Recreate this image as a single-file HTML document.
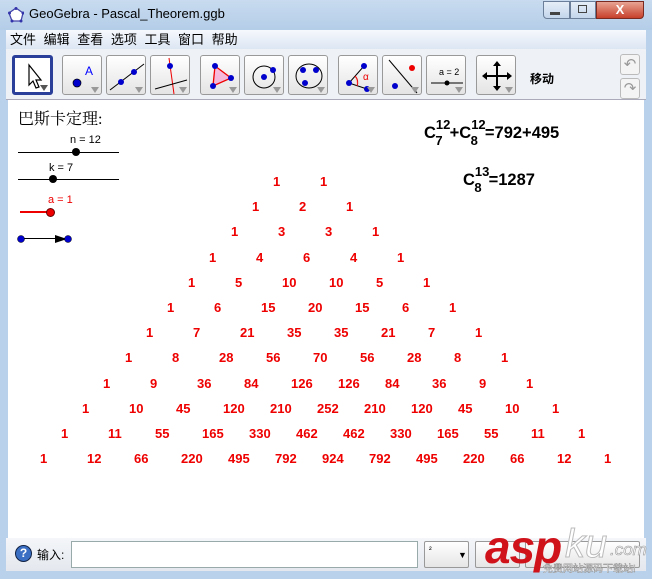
<!DOCTYPE html>
<html><head><meta charset="utf-8"><style>
*{margin:0;padding:0;box-sizing:border-box}
body{width:652px;height:579px;overflow:hidden;position:relative;background:#b9d1ea;font-family:"Liberation Sans","Noto Sans CJK SC",sans-serif}
.a{position:absolute}
.title{left:0;top:0;width:652px;height:30px;background:linear-gradient(#c8dbef,#b4cde8)}
.menu{left:6px;top:30px;width:640px;height:19px;background:linear-gradient(#f6f9fd,#dce6f3);font-size:13px;color:#000;line-height:19px;padding-left:4px;word-spacing:4px}
.tool{left:6px;top:49px;width:640px;height:51px;background:#eef2f7;border-bottom:1px solid #aab}
.btn{position:absolute;top:55px;width:40px;height:40px;background:linear-gradient(#fff,#e4e4e4);border:1px solid #999;border-radius:3px}
.btn svg{position:absolute;left:0;top:0}
.tri{position:absolute;right:2px;bottom:1px;width:0;height:0;border-left:4px solid transparent;border-right:4px solid transparent;border-top:6px solid #999}
.canvas{left:8px;top:100px;width:636px;height:438px;background:#fff}
.row{position:absolute;font-weight:bold;font-size:13px;color:#e00;white-space:nowrap}
.row span{display:inline-block;width:47px;text-align:left}
.bottom{left:6px;top:538px;width:640px;height:33px;background:linear-gradient(#f4f6f9,#e4e8ee)}
</style></head><body>
<div class="a title"></div>
<svg class="a" style="left:8px;top:7px" width="16" height="16"><polygon points="8,1 15,6 13,14 4,14 1,6" fill="#fff" stroke="#44a" stroke-width="1.3"/><circle cx="8" cy="1.5" r="1.5" fill="#33a"/><circle cx="15" cy="6" r="1.5" fill="#33a"/><circle cx="13" cy="14" r="1.5" fill="#33a"/><circle cx="4" cy="14" r="1.5" fill="#33a"/><circle cx="1.5" cy="6" r="1.5" fill="#33a"/></svg>
<div class="a" style="left:29px;top:6px;font-size:13px">GeoGebra - Pascal_Theorem.ggb</div>
<div class="a" style="left:543px;top:1px;width:27px;height:18px;border:1px solid #6b7f9a;border-radius:0 0 0 4px;background:linear-gradient(#e5eef8,#c4d6ec)"></div>
<div class="a" style="left:550px;top:12px;width:10px;height:3px;background:#444"></div>
<div class="a" style="left:570px;top:1px;width:26px;height:18px;border:1px solid #6b7f9a;background:linear-gradient(#e5eef8,#c4d6ec)"></div>
<div class="a" style="left:578px;top:5px;width:9px;height:8px;border:1.5px solid #444"></div>
<div class="a" style="left:596px;top:1px;width:48px;height:18px;border:1px solid #7a2a20;border-radius:0 0 4px 0;background:linear-gradient(#e8a493,#c7402b);color:#fff;font-weight:bold;text-align:center;font-size:13px;line-height:16px">X</div>
<div class="a menu">文件 编辑 查看 选项 工具 窗口 帮助</div>
<div class="a tool"></div>
<div class="btn" style="left:12px;width:41px;border:3px solid #2a3f9a;background:#fff"><svg width="36" height="36"><path d="M14 7 L14 27 L18 23 L21 30 L24 29 L21 22 L26 22 Z" fill="#fff" stroke="#000" stroke-width="1.2"/></svg><div class="tri" style="border-top-color:#555"></div></div>
<div class="btn" style="left:62px"><svg width="40" height="40"><circle cx="14" cy="27" r="4" fill="#00c" stroke="#000" stroke-width=".7"/><text x="22" y="19" font-size="12" fill="#00f" font-family="Liberation Sans">A</text></svg><div class="tri"></div></div>
<div class="btn" style="left:106px"><svg width="40" height="40"><line x1="3" y1="34" x2="37" y2="8" stroke="#000"/><circle cx="14" cy="26" r="3" fill="#00c"/><circle cx="27" cy="16" r="3" fill="#00c"/></svg><div class="tri"></div></div>
<div class="btn" style="left:150px"><svg width="40" height="40"><line x1="18" y1="2" x2="23" y2="38" stroke="#e00"/><line x1="4" y1="33" x2="36" y2="24" stroke="#000"/><circle cx="19" cy="10" r="3" fill="#00c"/></svg><div class="tri"></div></div>
<div class="btn" style="left:200px"><svg width="40" height="40"><polygon points="14,10 30,22 12,30" fill="#f6b" fill-opacity=".4" stroke="#e00" stroke-width="1.3"/><circle cx="14" cy="10" r="3" fill="#00c"/><circle cx="30" cy="22" r="3" fill="#00c"/><circle cx="12" cy="30" r="3" fill="#00c"/></svg><div class="tri"></div></div>
<div class="btn" style="left:244px"><svg width="40" height="40"><circle cx="19" cy="21" r="11" fill="none" stroke="#000"/><circle cx="19" cy="21" r="3" fill="#00c"/><circle cx="28" cy="14" r="3" fill="#00c"/></svg><div class="tri"></div></div>
<div class="btn" style="left:288px"><svg width="40" height="40"><ellipse cx="20" cy="20" rx="13" ry="12" fill="none" stroke="#000"/><circle cx="14" cy="14" r="3" fill="#00c"/><circle cx="27" cy="14" r="3" fill="#00c"/><circle cx="16" cy="27" r="3" fill="#00c"/></svg><div class="tri"></div></div>
<div class="btn" style="left:338px"><svg width="40" height="40"><path d="M25 10 L10 27 L28 33" fill="none" stroke="#000"/><path d="M16 20 A9 9 0 0 1 18 30" fill="#f99" fill-opacity=".5" stroke="#e00"/><text x="24" y="24" font-size="10" fill="#e00">α</text><circle cx="25" cy="10" r="3" fill="#00c"/><circle cx="10" cy="27" r="3" fill="#00c"/><circle cx="28" cy="33" r="3" fill="#00c"/></svg><div class="tri"></div></div>
<div class="btn" style="left:382px"><svg width="40" height="40"><line x1="6" y1="4" x2="34" y2="37" stroke="#000"/><circle cx="29" cy="12" r="3" fill="#e00"/><circle cx="12" cy="30" r="3" fill="#00c"/></svg><div class="tri"></div></div>
<div class="btn" style="left:426px"><svg width="40" height="40"><text x="12" y="19" font-size="9" font-family="Liberation Sans">a = 2</text><line x1="4" y1="27" x2="36" y2="27" stroke="#000"/><circle cx="20" cy="27" r="2.5"/></svg><div class="tri"></div></div>
<div class="btn" style="left:476px"><svg width="40" height="40"><path d="M20 7 V33 M7 20 H33" stroke="#000" stroke-width="2"/><path d="M20 5 L16 10 H24Z M20 35 L16 30 H24Z M5 20 L10 16 V24Z M35 20 L30 16 V24Z" fill="#000"/></svg><div class="tri"></div></div>
<div class="a" style="left:530px;top:70px;font-size:12px;font-weight:bold">移动</div>
<div class="a" style="left:620px;top:54px;width:20px;height:21px;border:1px solid #bbb;border-radius:3px;background:#f4f4f4;color:#999;font-size:15px;text-align:center;line-height:19px">↶</div>
<div class="a" style="left:620px;top:78px;width:20px;height:21px;border:1px solid #bbb;border-radius:3px;background:#f4f4f4;color:#999;font-size:15px;text-align:center;line-height:19px">↷</div>
<div class="a canvas"></div>
<div class="a" style="left:18px;top:106px;font-size:16px;font-family:'Liberation Serif','Noto Serif CJK SC',serif">巴斯卡定理:</div>
<div class="a" style="left:70px;top:134px;font-size:11px">n = 12</div>
<div class="a" style="left:18px;top:152px;width:101px;height:1px;background:#000"></div>
<div class="a" style="left:72px;top:148px;width:8px;height:8px;border-radius:50%;background:#000"></div>
<div class="a" style="left:49px;top:162px;font-size:11px">k = 7</div>
<div class="a" style="left:18px;top:179px;width:101px;height:1px;background:#000"></div>
<div class="a" style="left:49px;top:175px;width:8px;height:8px;border-radius:50%;background:#000"></div>
<div class="a" style="left:48px;top:194px;font-size:11px;color:#e00">a = 1</div>
<div class="a" style="left:20px;top:211px;width:30px;height:2px;background:#e00"></div>
<div class="a" style="left:46px;top:208px;width:9px;height:9px;border-radius:50%;background:#e00;border:1px solid #600"></div>
<div class="a" style="left:20px;top:238px;width:48px;height:1px;background:#000"></div>
<svg class="a" style="left:15px;top:233px" width="60" height="12"><polygon points="40,2 52,6 40,10" fill="#000"/><circle cx="6" cy="6" r="3.5" fill="#00c" stroke="#000" stroke-width=".5"/><circle cx="53" cy="6" r="3.5" fill="#00c" stroke="#000" stroke-width=".5"/></svg>
<div class="a" style="left:424px;top:125px;font-size:16.5px;font-weight:bold;white-space:nowrap;line-height:1">C<span style="position:relative;top:-9px;font-size:13px">12</span><span style="position:relative;top:7px;left:-15px;font-size:13px;margin-right:-8px">7</span>+C<span style="position:relative;top:-9px;font-size:13px">12</span><span style="position:relative;top:7px;left:-15px;font-size:13px;margin-right:-8px">8</span>=792+495</div>
<div class="a" style="left:463px;top:172px;font-size:16.5px;font-weight:bold;white-space:nowrap;line-height:1">C<span style="position:relative;top:-9px;font-size:13px">13</span><span style="position:relative;top:7px;left:-15px;font-size:13px;margin-right:-8px">8</span>=1287</div>
<div class="row" style="top:174px;left:273px"><span>1</span><span>1</span></div>
<div class="row" style="top:199px;left:252px"><span>1</span><span>2</span><span>1</span></div>
<div class="row" style="top:224px;left:231px"><span>1</span><span>3</span><span>3</span><span>1</span></div>
<div class="row" style="top:250px;left:209px"><span>1</span><span>4</span><span>6</span><span>4</span><span>1</span></div>
<div class="row" style="top:275px;left:188px"><span>1</span><span>5</span><span>10</span><span>10</span><span>5</span><span>1</span></div>
<div class="row" style="top:300px;left:167px"><span>1</span><span>6</span><span>15</span><span>20</span><span>15</span><span>6</span><span>1</span></div>
<div class="row" style="top:325px;left:146px"><span>1</span><span>7</span><span>21</span><span>35</span><span>35</span><span>21</span><span>7</span><span>1</span></div>
<div class="row" style="top:350px;left:125px"><span>1</span><span>8</span><span>28</span><span>56</span><span>70</span><span>56</span><span>28</span><span>8</span><span>1</span></div>
<div class="row" style="top:376px;left:103px"><span>1</span><span>9</span><span>36</span><span>84</span><span>126</span><span>126</span><span>84</span><span>36</span><span>9</span><span>1</span></div>
<div class="row" style="top:401px;left:82px"><span>1</span><span>10</span><span>45</span><span>120</span><span>210</span><span>252</span><span>210</span><span>120</span><span>45</span><span>10</span><span>1</span></div>
<div class="row" style="top:426px;left:61px"><span>1</span><span>11</span><span>55</span><span>165</span><span>330</span><span>462</span><span>462</span><span>330</span><span>165</span><span>55</span><span>11</span><span>1</span></div>
<div class="row" style="top:451px;left:40px"><span>1</span><span>12</span><span>66</span><span>220</span><span>495</span><span>792</span><span>924</span><span>792</span><span>495</span><span>220</span><span>66</span><span>12</span><span>1</span></div>
<div class="a bottom"></div>
<div class="a" style="left:15px;top:545px;width:17px;height:17px;border-radius:50%;background:#3a6fc4;border:1px solid #124;color:#fff;font-size:12px;font-weight:bold;text-align:center;line-height:15px">?</div>
<div class="a" style="left:37px;top:546px;font-size:12px">输入:</div>
<div class="a" style="left:71px;top:541px;width:347px;height:27px;background:#fff;border:1px solid #9aa"></div>
<div class="a" style="left:424px;top:541px;width:45px;height:27px;border:1px solid #999;border-radius:2px;background:linear-gradient(#fff,#e6e6e6);font-size:8px;padding:3px 4px">²<span style="position:absolute;left:33px;top:8px;font-size:9px">▼</span></div>
<div class="a" style="left:475px;top:541px;width:45px;height:27px;border:1px solid #999;border-radius:2px;background:linear-gradient(#fff,#e6e6e6)"></div>
<div class="a" style="left:525px;top:541px;width:115px;height:27px;border:1px solid #999;border-radius:2px;background:linear-gradient(#fff,#e6e6e6)"></div>
<div class="a" style="left:485px;top:520px;font-size:46px;font-weight:bold;font-style:italic;color:#d0121b;letter-spacing:-1px">asp</div>
<div class="a" style="left:565px;top:522px;font-size:40px;font-style:italic;color:#fff;-webkit-text-stroke:1px #bbb">ku</div>
<div class="a" style="left:610px;top:540px;font-size:17px;font-style:italic;color:#fff;-webkit-text-stroke:.6px #999">.com</div>
<div class="a" style="left:543px;top:560px;font-size:10px;color:#fff;-webkit-text-stroke:.4px #888">免费网站源码下载站!</div>
</body></html>
